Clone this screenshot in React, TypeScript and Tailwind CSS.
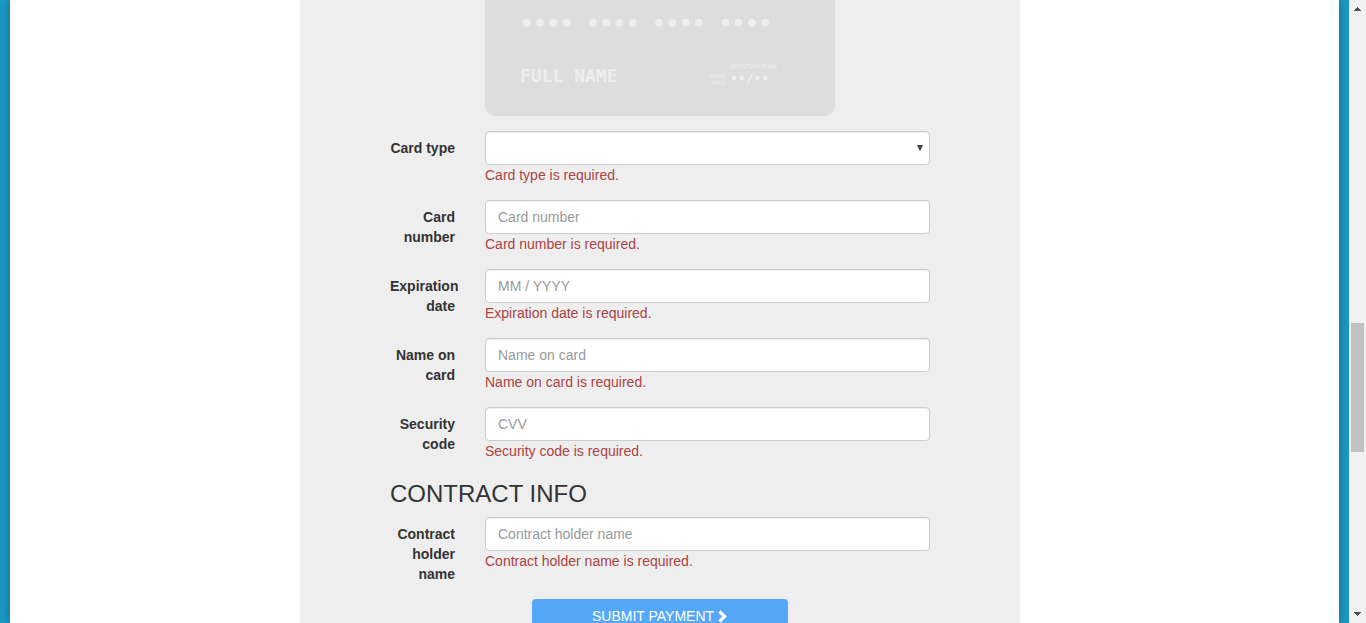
import React from "react";

type Field = { id: string; label: string; placeholder: string; error: string };

const paymentFields: Field[] = [
  { id: "card-number", label: "Card number", placeholder: "Card number", error: "Card number is required." },
  { id: "expiration", label: "Expiration date", placeholder: "MM / YYYY", error: "Expiration date is required." },
  { id: "card-name", label: "Name on card", placeholder: "Name on card", error: "Name on card is required." },
  { id: "cvv", label: "Security code", placeholder: "CVV", error: "Security code is required." },
];

const controlClass =
  "block h-[34px] w-full rounded border border-[#ccc] bg-white px-3 text-sm text-[#555] shadow-[inset_0_1px_1px_rgba(0,0,0,0.075)] placeholder:text-[#999] focus:border-[#66afe9] focus:outline-none";

function FormRow({ id, label, error, children }: { id: string; label: string; error: string; children: React.ReactNode }) {
  return (
    <div className="flex gap-[30px]">
      <label htmlFor={id} className="w-[65px] shrink-0 pt-[7px] text-right font-bold">
        {label}
      </label>
      <div className="min-w-0 flex-1">
        {children}
        <p className="text-[#a94442]">{error}</p>
      </div>
    </div>
  );
}

function TextRow({ field }: { field: Field }) {
  return (
    <FormRow id={field.id} label={field.label} error={field.error}>
      <input id={field.id} type="text" placeholder={field.placeholder} className={controlClass} />
    </FormRow>
  );
}

function CardPreview() {
  return (
    <div className="ml-[95px] h-[116px] max-w-[350px] rounded-b-[10px] bg-[#ddd] px-[35px] pt-[9px] font-['DejaVu_Sans_Mono',monospace] text-[#eee]">
      <div className="text-[22px] leading-[30px] font-bold whitespace-pre">•••• •••• •••• ••••</div>
      <div className="flex items-start pt-[24px]">
        <div className="w-[189px] text-lg leading-[26px] font-bold">FULL NAME</div>
        <div className="w-4 pt-[9px] text-right font-['Liberation_Sans',sans-serif] text-[7px] leading-[7px] font-bold text-[#e8e8e8]">
          valid thru
        </div>
        <div className="pl-[5px]">
          <div className="font-['Liberation_Sans',sans-serif] text-[7px] leading-[7px] font-bold text-[#e8e8e8]">MONTH/YEAR</div>
          <div className="text-[13px] leading-[18px] font-bold">••/••</div>
        </div>
      </div>
    </div>
  );
}

function PageScrollbar() {
  return (
    <div aria-hidden="true" className="flex w-[17px] shrink-0 flex-col items-center bg-[#f1f1f1] py-[7px]">
      <svg width="7" height="4" viewBox="0 0 7 4" fill="#505050" shapeRendering="crispEdges">
        <path d="M3 0h1v1h1v1h1v1h1v1H0V3h1V2h1V1h1z" />
      </svg>
      <div className="mt-[312px] h-[129px] w-[13px] bg-[#c1c1c1]" />
      <svg width="7" height="4" viewBox="0 0 7 4" fill="#505050" shapeRendering="crispEdges" className="mt-auto">
        <path d="M0 0h7v1H6v1H5v1H4v1H3V3H2V2H1V1H0z" />
      </svg>
    </div>
  );
}

export default function App() {
  return (
    <div className="flex h-screen overflow-hidden bg-[#1b98c4] font-['Liberation_Sans',Arial,sans-serif] text-sm leading-5 text-[#333]">
      <div className="flex min-w-0 flex-1 px-[10px]">
        <main className="min-w-0 flex-1 bg-white pr-[29px] shadow-[0_0_10px_rgba(0,0,0,0.3)]">
          <section className="mx-auto min-h-screen max-w-[720px] bg-[#eee] px-[90px]">
            <CardPreview />
            <form onSubmit={(e) => e.preventDefault()} className="pt-[15px]">
              <div className="flex flex-col gap-[15px]">
                <FormRow id="card-type" label="Card type" error="Card type is required.">
                  <div className="relative">
                    <select id="card-type" defaultValue="" className={`${controlClass} appearance-none`}>
                      <option value=""></option>
                      <option value="visa">Visa</option>
                      <option value="mastercard">MasterCard</option>
                    </select>
                    <svg
                      aria-hidden="true"
                      width="6"
                      height="6"
                      viewBox="0 0 6 6"
                      fill="#444"
                      className="pointer-events-none absolute top-[14px] right-[7px]"
                    >
                      <path d="M0 0h6L3.5 5.5h-1z" />
                    </svg>
                  </div>
                </FormRow>
                {paymentFields.map((f) => (
                  <TextRow key={f.id} field={f} />
                ))}
              </div>
              <h3 className="mt-5 mb-[10px] text-2xl leading-[26px]">CONTRACT INFO</h3>
              <TextRow
                field={{
                  id: "holder",
                  label: "Contract holder name",
                  placeholder: "Contract holder name",
                  error: "Contract holder name is required.",
                }}
              />
              <button
                type="submit"
                className="mx-auto mt-[15px] flex h-[34px] w-[256px] items-center justify-center gap-1 rounded bg-[#55a8f9] text-white"
              >
                SUBMIT PAYMENT
                <svg aria-hidden="true" width="10" height="13" viewBox="0 0 10 13" fill="none" stroke="currentColor" strokeWidth="3.2">
                  <path d="M1.4 1.4L6.6 6.5L1.4 11.6" />
                </svg>
              </button>
            </form>
          </section>
        </main>
      </div>
      <PageScrollbar />
    </div>
  );
}
